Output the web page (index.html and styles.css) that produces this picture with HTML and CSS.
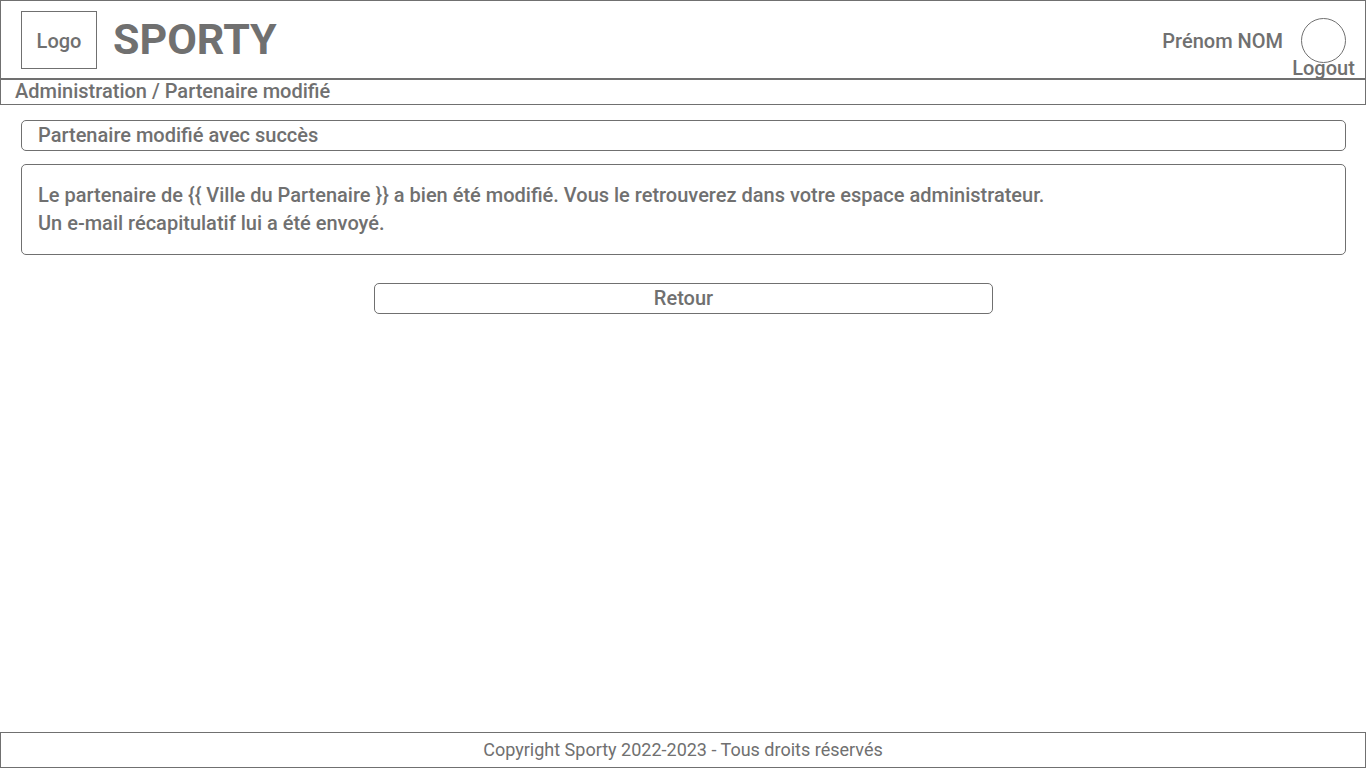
FILE: index.html
```html
<!DOCTYPE html>
<html lang="fr">
<head>
  <meta charset="utf-8">
  <meta name="viewport" content="width=device-width, initial-scale=1">
  <title>Sporty - Partenaire modifié</title>
  <link rel="stylesheet" href="styles.css">
</head>
<body class="page">
  <header class="header">
    <div class="logo">Logo</div>
    <h1 class="brand">SPORTY</h1>
    <div class="user">
      <span class="user-name">Prénom NOM</span>
      <div class="account">
        <div class="avatar"></div>
        <a class="logout" href="#">Logout</a>
      </div>
    </div>
  </header>
  <nav class="breadcrumb" aria-label="Fil d'Ariane">Administration / Partenaire modifié</nav>
  <main class="content">
    <h2 class="title">Partenaire modifié avec succès</h2>
    <div class="message">
      <p class="line">Le partenaire de {{ Ville du Partenaire }} a bien été modifié. Vous le retrouverez dans votre espace administrateur.</p>
      <p class="line">Un e-mail récapitulatif lui a été envoyé.</p>
    </div>
    <button class="back" type="button">Retour</button>
  </main>
  <footer class="footer">Copyright Sporty 2022-2023 - Tous droits réservés</footer>
</body>
</html>
```

FILE: styles.css
```css
* {
  box-sizing: border-box;
}

.page {
  display: flex;
  flex-direction: column;
  min-height: 100vh;
  margin: 0;
  background: #fff;
  color: #707070;
  font-family: Roboto, "Liberation Sans", sans-serif;
  font-size: 20px;
  font-weight: 500;
  line-height: 28px;
}

.header {
  display: flex;
  align-items: center;
  gap: 16px;
  padding: 10px 19px 9px 20px;
  border: 1px solid #707070;
}

.logo {
  display: grid;
  place-items: center;
  width: 76px;
  height: 58px;
  padding-top: 2px;
  border: 1px solid #707070;
}

.brand {
  margin: 0 0 2px;
  font-size: 43px;
  font-weight: 700;
  line-height: 52px;
}

.user {
  display: flex;
  align-items: center;
  gap: 18px;
  margin-left: auto;
}

.user-name {
  padding-top: 2px;
}

.account {
  position: relative;
}

.avatar {
  width: 45px;
  height: 45px;
  border: 1px solid #707070;
  border-radius: 50%;
}

.logout {
  position: absolute;
  top: 36px;
  left: 50%;
  transform: translateX(-50%);
  color: inherit;
  text-decoration: none;
}

.breadcrumb {
  padding: 0 14px 2px;
  border: 1px solid #707070;
  line-height: 22px;
}

.content {
  display: flex;
  flex: 1;
  flex-direction: column;
  padding: 15px 20px 15px 21px;
}

.title {
  margin: 0 0 13px;
  padding: 0 16px;
  border: 1px solid #707070;
  border-radius: 5px;
  font-size: 20px;
  font-weight: 500;
  line-height: 29px;
}

.message {
  padding: 16px 16px 17px;
  border: 1px solid #707070;
  border-radius: 5px;
}

.line {
  margin: 0;
}

.back {
  align-self: center;
  width: 619px;
  max-width: 100%;
  margin-top: 28px;
  padding: 0;
  border: 1px solid #707070;
  border-radius: 5px;
  background: #fff;
  color: inherit;
  font: inherit;
  line-height: 29px;
  cursor: pointer;
}

.footer {
  padding: 3px 16px;
  border: 1px solid #707070;
  font-size: 18px;
  font-weight: 400;
  text-align: center;
}
```
